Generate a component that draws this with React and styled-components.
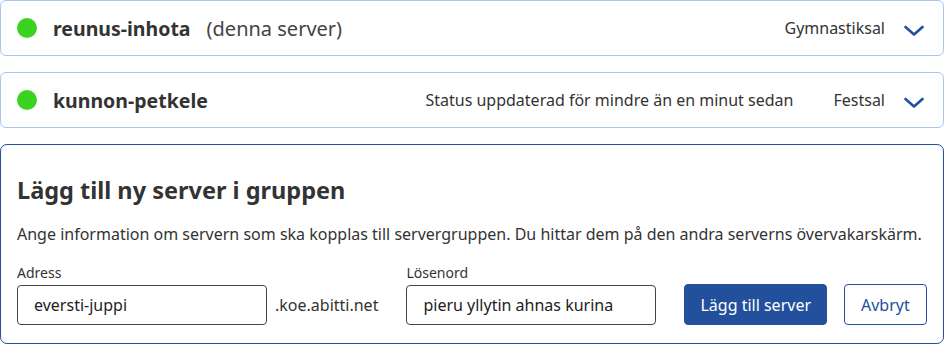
import React from 'react';
import styled, { createGlobalStyle } from 'styled-components';

const GlobalStyle = createGlobalStyle`
  html, body {
    margin: 0;
    padding: 0;
    background: #fff;
  }
  body {
    font-family: "Noto Sans", "Open Sans", sans-serif;
    color: #333;
  }
`;

const Page = styled.div`
  display: flex;
  flex-direction: column;
  gap: 16px;
  width: 944px;
`;

const ServerCard = styled.div`
  box-sizing: border-box;
  height: 56px;
  border: 1px solid #a9c6f3;
  border-radius: 6px;
  display: flex;
  align-items: center;
  padding: 0 16px;
  gap: 16px;
`;

const StatusDot = styled.span`
  width: 20px;
  height: 20px;
  border-radius: 50%;
  background: ${(p) => (p.online ? '#3bd31f' : '#d33')};
  flex: none;
`;

const ServerName = styled.span`
  font-size: 19.5px;
  font-weight: 700;
  color: #333;
`;

const ThisServer = styled.span`
  font-size: 20px;
  color: #444;
`;

const Spacer = styled.span`
  flex: 1;
`;

const Meta = styled.span`
  font-size: 16px;
  color: #333;
  white-space: nowrap;
  margin-right: ${(p) => p.gap || 0}px;
`;

const Chevron = styled.svg`
  width: 20px;
  height: 20px;
  flex: none;
  margin: 0 3px;
`;

const FormCard = styled.div`
  box-sizing: border-box;
  height: 200px;
  border: 1px solid #23509c;
  border-radius: 7px;
  padding: 30px 16px 16px;
`;

const Heading = styled.h2`
  margin: 0;
  font-size: 23.5px;
  line-height: 30px;
  font-weight: 700;
  color: #333;
`;

const Description = styled.p`
  margin: 17px 0 0;
  font-size: 16px;
  line-height: 24px;
  color: #333;
`;

const FormRow = styled.div`
  display: flex;
  align-items: flex-end;
  margin-top: 17px;
`;

const Field = styled.label`
  display: flex;
  flex-direction: column;
  gap: 2px;
  margin-right: ${(p) => p.gap || 0}px;
`;

const FieldLabel = styled.span`
  font-size: 14px;
  line-height: 20px;
  color: #333;
`;

const Input = styled.input`
  box-sizing: border-box;
  width: 250px;
  height: 40px;
  border: 1px solid #444;
  border-radius: 4px;
  padding: 0 16px;
  font-family: inherit;
  font-size: 16px;
  color: #222;
  outline: none;
`;

const Suffix = styled.span`
  font-size: 16px;
  line-height: 40px;
  color: #333;
  white-space: nowrap;
  margin: 0 28px 0 8px;
`;

const Button = styled.button`
  box-sizing: border-box;
  flex: none;
  height: 41px;
  padding: 0 ${(p) => (p.primary ? 15 : 16)}px;
  border-radius: 4px;
  font-family: inherit;
  font-size: 16px;
  white-space: nowrap;
  cursor: pointer;
  border: 1px solid #22509c;
  background: ${(p) => (p.primary ? '#22509c' : '#fff')};
  color: ${(p) => (p.primary ? '#fff' : '#22509c')};
  margin-right: ${(p) => p.gap || 0}px;
`;

const ChevronDown = () => (
  <Chevron viewBox="0 0 20 20" fill="none">
    <polyline points="1.5,9 10,16.5 18.5,9" stroke="#22509c" strokeWidth="2.6" strokeLinecap="round" strokeLinejoin="round" />
  </Chevron>
);

const App = () => {
  return (
    <Page>
      <GlobalStyle />
      <ServerCard>
        <StatusDot online />
        <ServerName>reunus-inhota</ServerName>
        <ThisServer>(denna server)</ThisServer>
        <Spacer />
        <Meta>Gymnastiksal</Meta>
        <ChevronDown />
      </ServerCard>
      <ServerCard>
        <StatusDot online />
        <ServerName>kunnon-petkele</ServerName>
        <Spacer />
        <Meta gap={24}>Status uppdaterad för mindre än en minut sedan</Meta>
        <Meta>Festsal</Meta>
        <ChevronDown />
      </ServerCard>
      <FormCard>
        <Heading>Lägg till ny server i gruppen</Heading>
        <Description>
          Ange information om servern som ska kopplas till servergruppen. Du hittar dem på den andra serverns övervakarskärm.
        </Description>
        <FormRow>
          <Field>
            <FieldLabel>Adress</FieldLabel>
            <Input defaultValue="eversti-juppi" />
          </Field>
          <Suffix>.koe.abitti.net</Suffix>
          <Field gap={28}>
            <FieldLabel>Lösenord</FieldLabel>
            <Input defaultValue="pieru yllytin ahnas kurina" />
          </Field>
          <Button primary gap={17}>Lägg till server</Button>
          <Button>Avbryt</Button>
        </FormRow>
      </FormCard>
    </Page>
  );
};

export default App;
